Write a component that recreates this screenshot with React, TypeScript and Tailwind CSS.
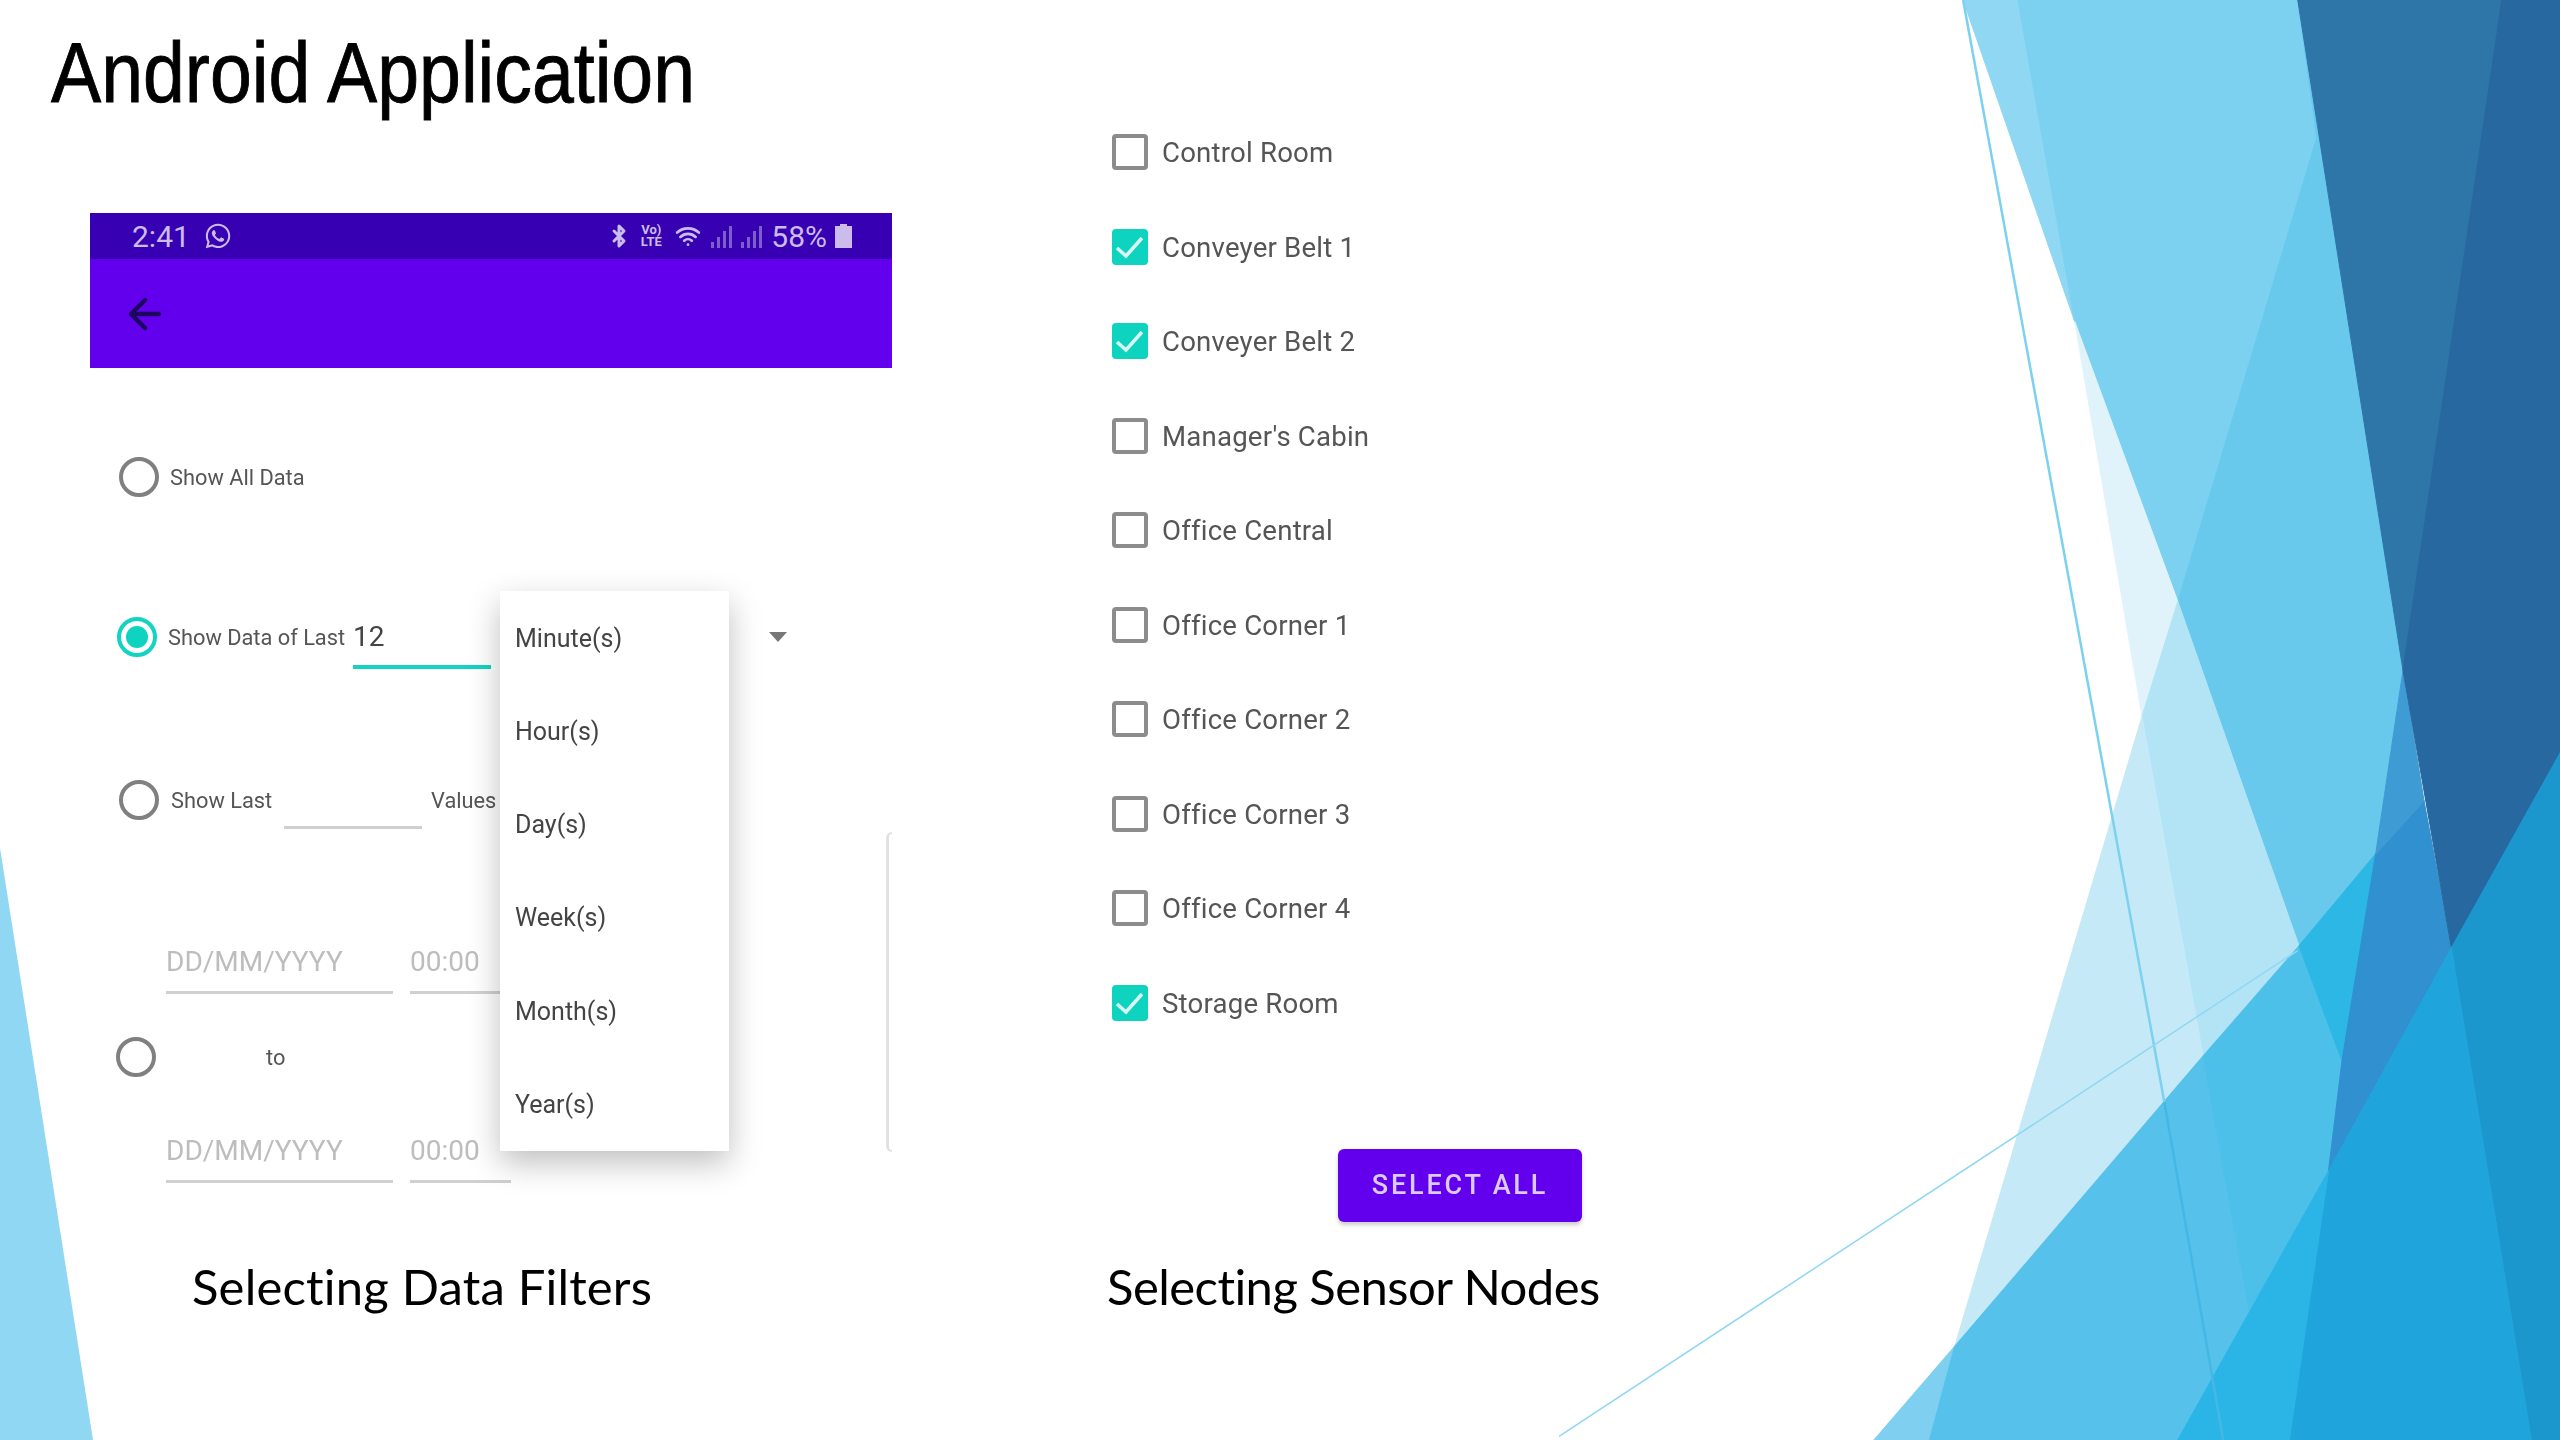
import { ArrowLeft, Bluetooth, Wifi } from "lucide-react";
import { FaWhatsapp } from "react-icons/fa";

const ROBOTO = "font-['Roboto',sans-serif]";

const sensors = [
  { name: "Control Room", checked: false },
  { name: "Conveyer Belt 1", checked: true },
  { name: "Conveyer Belt 2", checked: true },
  { name: "Manager's Cabin", checked: false },
  { name: "Office Central", checked: false },
  { name: "Office Corner 1", checked: false },
  { name: "Office Corner 2", checked: false },
  { name: "Office Corner 3", checked: false },
  { name: "Office Corner 4", checked: false },
  { name: "Storage Room", checked: true },
];

const units = ["Minute(s)", "Hour(s)", "Day(s)", "Week(s)", "Month(s)", "Year(s)"];

// Slide theme facets, in the 1568x1568 space of the right hand 660x1440 strip
const facets: [string, string][] = [
  ["150,0 280,0 415,350", "#8fd7f2"],
  ["280,0 945,0 990,150 660,655 415,350", "#7dd1f0"],
  ["990,150 945,0 1195,730 1130,930 948,1030 660,655", "#68c9ec"],
  ["415,350 660,655 575,780", "#e0f3fb"],
  ["660,655 948,1030 720,1150 575,780", "#b2e4f6"],
  ["575,780 720,1150 130,1466", "#c6e9f7"],
  ["-62,1568 130,1466 70,1568", "#7fcff0"],
  ["130,1466 720,1150 830,1429 660,1568 70,1568", "#56c1ea"],
  ["720,1150 948,1030 1050,1155 1018,1275 830,1429", "#4dc0ea"],
  ["948,1030 1130,930 1050,1155", "#2db7e5"],
  ["1130,930 1245,872 1310,1032 1018,1275 1050,1155", "#3090d0"],
  ["1195,730 1245,872 1130,930", "#3f9bd3"],
  ["945,0 1430,0 1195,730", "#2e75a8"],
  ["1430,0 1568,0 1568,820 1310,1032 1195,730", "#26689f"],
  ["1568,820 1568,1568 1500,1568 1310,1032", "#1b97cd"],
  ["1310,1032 1500,1568 925,1568 1018,1275", "#1fa5db"],
  ["1018,1275 925,1568 660,1568", "#2ab5e6"],
];

function Facets() {
  return (
    <svg
      className="absolute left-[1900px] top-0 w-[660px] h-[1440px] overflow-visible"
      viewBox="0 0 1568 1568"
      preserveAspectRatio="none"
    >
      {facets.map(([points, fill]) => (
        <polygon key={points} points={points} fill={fill} stroke={fill} strokeWidth="1" vectorEffect="non-scaling-stroke" />
      ))}
      <line x1="150" y1="0" x2="628" y2="1200" stroke="#7dd1f0" strokeWidth="2.5" vectorEffect="non-scaling-stroke" />
      <line x1="628" y1="1200" x2="768" y2="1568" stroke="#45b7e4" strokeWidth="2.5" vectorEffect="non-scaling-stroke" />
      <line x1="-810" y1="1564" x2="945" y2="1035" stroke="#8fd7f2" strokeWidth="1.5" vectorEffect="non-scaling-stroke" />
    </svg>
  );
}

function Radio({ checked = false }: { checked?: boolean }) {
  if (checked) {
    return (
      <span className="w-[40px] h-[40px] rounded-full border-[4px] border-[#14d3c0] flex items-center justify-center shrink-0">
        <span className="w-[22px] h-[22px] rounded-full bg-[#0dd3bf]" />
      </span>
    );
  }
  return <span className="w-[40px] h-[40px] rounded-full border-[4px] border-[#808080] shrink-0" />;
}

function SensorRow({ name, checked }: { name: string; checked: boolean }) {
  return (
    <li className="flex items-center h-[36px]">
      {checked ? (
        <span className="w-[36px] h-[36px] rounded-[4px] bg-[#0dd3bf] shrink-0">
          <svg viewBox="0 0 36 36" className="w-[36px] h-[36px]" fill="none" stroke="#d9f8f3" strokeWidth="3.5">
            <path d="M5 19l9 8 16-18" />
          </svg>
        </span>
      ) : (
        <span className="w-[36px] h-[36px] rounded-[4px] border-[4px] border-[#8c8c8c] shrink-0" />
      )}
      <span className="ml-[14px] pt-[2px] text-[#555] text-[27.6px] tracking-[0.2px] whitespace-nowrap">{name}</span>
    </li>
  );
}

function DateRow() {
  return (
    <div className="flex gap-[17px] ml-[76px]">
      <div className="w-[227px] h-[50px] border-b-[3px] border-[#d0d0d0] text-[28px] leading-[36px] text-[#bdbdbd]">
        DD/MM/YYYY
      </div>
      <div className="w-[101px] h-[50px] border-b-[3px] border-[#d0d0d0] text-[28px] leading-[36px] text-[#bdbdbd]">
        00:00
      </div>
    </div>
  );
}

export default function App() {
  return (
    <div className="relative w-[2560px] h-[1440px] overflow-hidden bg-white flex">
      <Facets />
      <div className="absolute left-0 top-[848px] w-[93px] h-[592px] bg-[#8fd7f2] [clip-path:polygon(0_0,100%_100%,0_100%)]" />

      {/* Left column: title and filter screen */}
      <section className="relative w-[892px] shrink-0 blur-[0.7px]">
        <h1 className="ml-[51px] mt-[25px] h-[96px] text-[85px] leading-[96px] text-black font-['Liberation_Sans',sans-serif] [-webkit-text-stroke:0.9px_black] whitespace-nowrap origin-left scale-x-[0.885]">
          Android Application
        </h1>

        <div className={`ml-[90px] mt-[92px] ${ROBOTO}`}>
          <div className="h-[46px] bg-[#3700b3] flex items-center pl-[42px] pr-[40px] text-[#cbbcec]">
            <span className="text-[30px]">2:41</span>
            <FaWhatsapp className="ml-[14px] w-[28px] h-[28px]" />
            <div className="ml-auto flex items-center gap-[8px]">
              <Bluetooth className="w-[24px] h-[26px]" strokeWidth={3} />
              <span className="w-[24px] text-[13px] leading-[12px] font-bold text-center">
                Vo)
                <br />
                LTE
              </span>
              <Wifi className="ml-[2px] w-[30px] h-[26px]" strokeWidth={2.5} />
              <svg viewBox="0 0 52 24" className="w-[52px] h-[24px]" fill="#7d5fc9">
                <rect x="0" y="18" width="3" height="6" />
                <rect x="6" y="13" width="3" height="11" />
                <rect x="12" y="7" width="3" height="17" />
                <rect x="18" y="2" width="3" height="22" />
                <rect x="30" y="18" width="3" height="6" />
                <rect x="36" y="13" width="3" height="11" />
                <rect x="42" y="7" width="3" height="17" />
                <rect x="48" y="2" width="3" height="22" />
              </svg>
              <span className="text-[30px]">58%</span>
              <svg viewBox="0 0 17 24" className="w-[17px] h-[24px]" fill="#cbbcec">
                <path d="M5 0h7v2h5v22H0V2h5z" />
              </svg>
            </div>
          </div>
          <div className="h-[109px] bg-[#6200ee] flex items-center pl-[31px]">
            <ArrowLeft className="w-[48px] h-[48px] text-[#1c0660]" strokeWidth={2.2} />
          </div>

          <div className="relative h-[890px] flex flex-col text-[#555] text-[21.8px]">
            <div className="flex items-center h-[40px] mt-[89px] ml-[29px]">
              <Radio />
              <span className="ml-[11px] pt-[3px]">Show All Data</span>
            </div>

            <div className="flex items-center h-[40px] mt-[120px] ml-[27px]">
              <Radio checked />
              <span className="ml-[11px] pt-[2px] w-[185px] whitespace-nowrap">Show Data of Last</span>
              <div className="self-start -mt-[2px] w-[138px] h-[54px] border-b-[4px] border-[#14d3c0] text-[28px] leading-[44px] text-[#444]">
                12
              </div>
            </div>

            <div className="flex items-center h-[40px] mt-[123px] ml-[29px]">
              <Radio />
              <span className="ml-[12px] pt-[3px] w-[99px] whitespace-nowrap">Show Last</span>
              <span className="ml-[14px] self-start w-[138px] h-[49px] border-b-[3px] border-[#d0d0d0]" />
              <span className="ml-[9px] pt-[3px]">Values</span>
            </div>

            <div className="mt-[124px]">
              <DateRow />
            </div>
            <div className="flex items-center h-[40px] mt-[43px] ml-[26px]">
              <Radio />
              <span className="ml-[110px] pt-[2px]">to</span>
            </div>
            <div className="mt-[56px]">
              <DateRow />
            </div>

            <svg viewBox="0 0 18 10" className="absolute top-[264px] left-[679px] w-[18px] h-[10px]" fill="#777">
              <path d="M0 0h18l-9 10z" />
            </svg>
            <div className="absolute top-[464px] right-0 w-[6px] h-[320px] rounded-l-[10px] border-l-[3px] border-y-[2px] border-[#e2e2e2]" />

            {/* Open unit dropdown */}
            <ul className="absolute top-[223px] left-[410px] w-[229px] bg-white shadow-[0_12px_30px_rgba(0,0,0,0.25)] flex flex-col pl-[15px] pt-[1px]">
              {units.map((u) => (
                <li key={u} className="h-[93.2px] flex items-center text-[25px] text-[#444]">
                  {u}
                </li>
              ))}
            </ul>
          </div>
        </div>

        <p className="absolute top-[1258px] left-[192px] text-[49px] leading-[56px] text-black font-['Lato',sans-serif] tracking-[0.18px] whitespace-nowrap">
          Selecting Data Filters
        </p>
      </section>

      {/* Right column: sensor list */}
      <section className={`relative ml-[220px] pt-[134px] blur-[0.7px] ${ROBOTO}`}>
        <ul className="flex flex-col gap-[58.5px]">
          {sensors.map((s) => (
            <SensorRow key={s.name} name={s.name} checked={s.checked} />
          ))}
        </ul>
        <button
          type="button"
          className="block mt-[128px] ml-[226px] w-[244px] h-[73px] rounded-[6px] bg-[#6200ee] text-[#dccbfa] text-[27px] font-medium tracking-[2.8px] shadow-[0_3px_4px_rgba(0,0,0,0.2)]"
        >
          SELECT ALL
        </button>
        <p className="mt-[36px] -ml-[5px] text-[49px] leading-[56px] text-black font-['Lato',sans-serif] tracking-[-0.55px] whitespace-nowrap">
          Selecting Sensor Nodes
        </p>
      </section>
    </div>
  );
}
